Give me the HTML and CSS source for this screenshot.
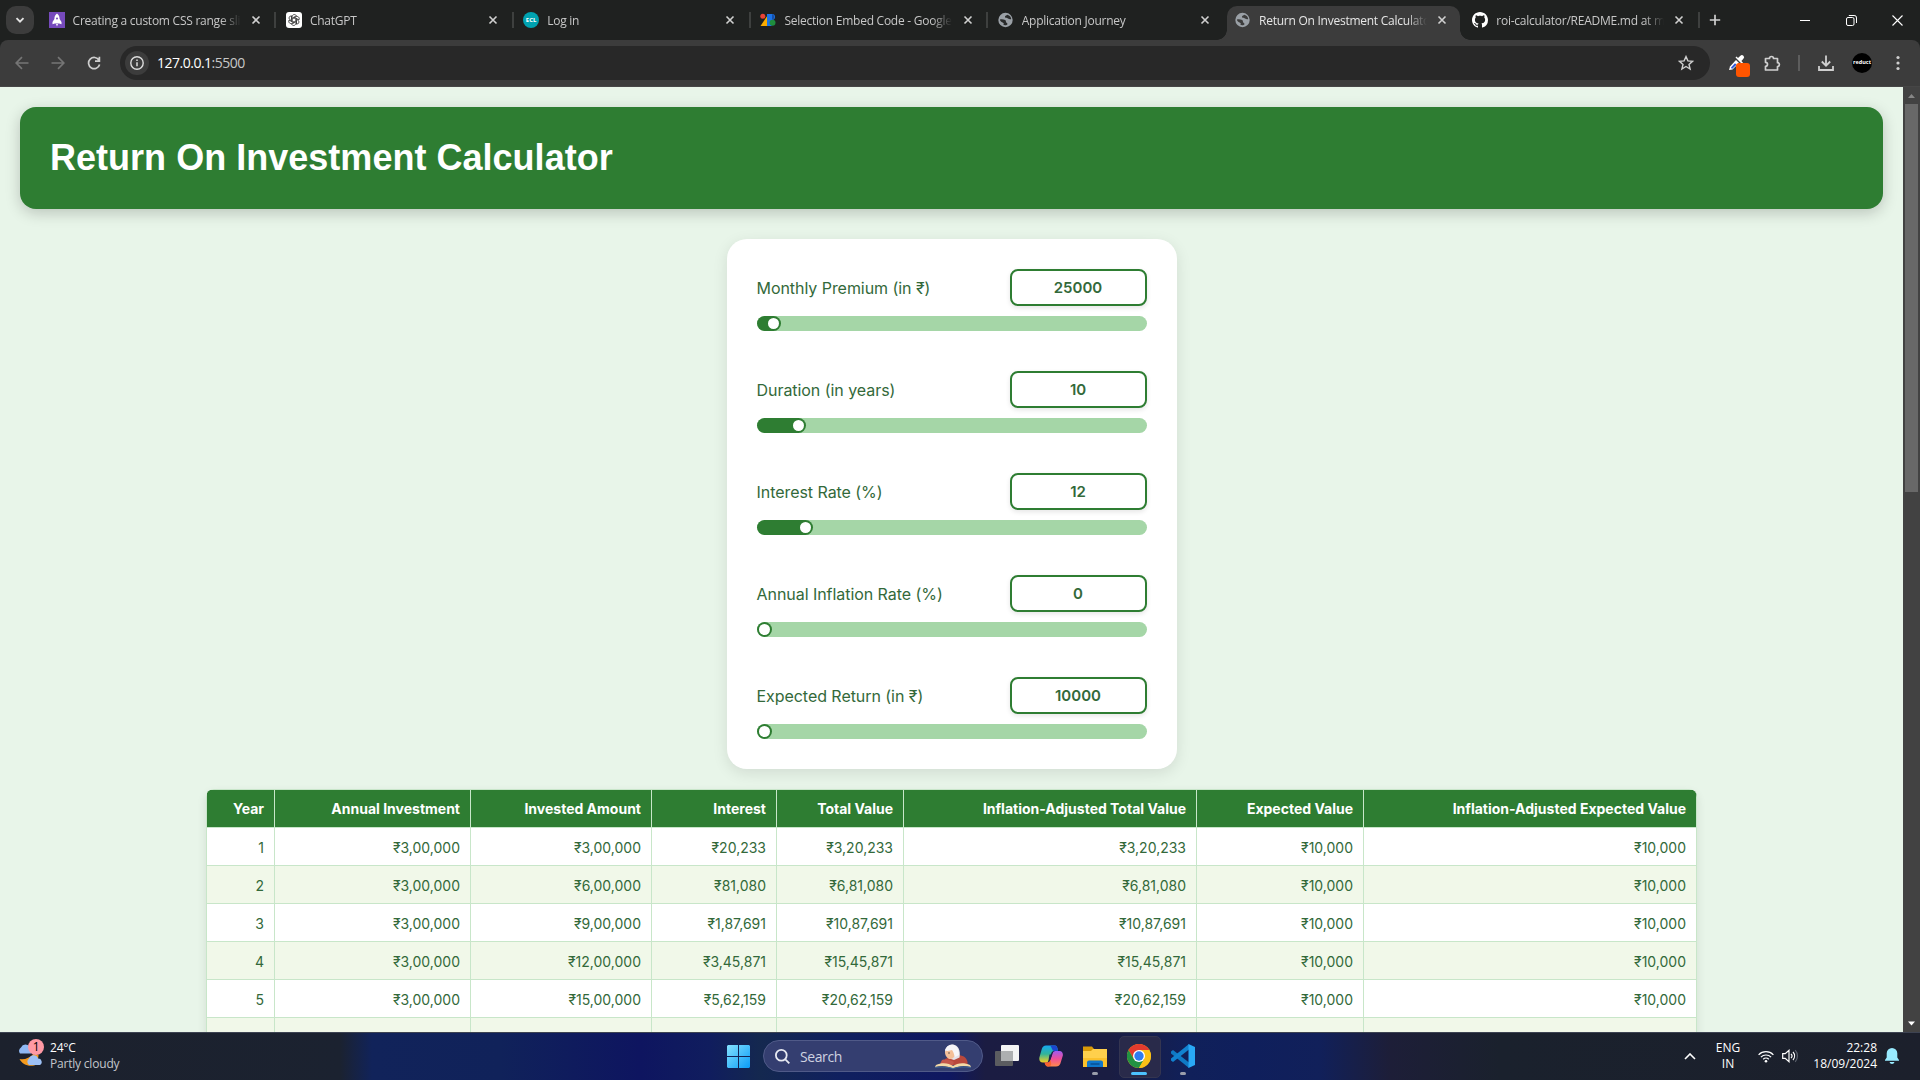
FILE: index.html
```html
<!DOCTYPE html>
<html lang="en">
<head>
<meta charset="utf-8">
<title>Return On Investment Calculator</title>
<link rel="stylesheet" href="styles.css">
</head>
<body>
<div class="screen">

<div class="tabstrip">
  <div class="tab-search"><svg width="12" height="12" viewBox="0 0 12 12"><path d="M2.500 4.200 6 7.700l3.500-3.500" fill="none" stroke="#e3e3e3" stroke-width="1.900"/></svg></div>
  <div class="tabs">
    <div class="tab">
      <svg class="fav" viewBox="0 0 16 16"><path fill="#764abc" d="M0 0h16v16H0z"/><path fill="#fff" d="M8 1.500c2 1.500 2.600 3.500 2.600 5.500L12.500 10v2.200l-2.300-.8H5.800l-2.300.8V10l1.900-3C5.400 5 6 3 8 1.500zM7 12h2l-1 2.600z"/><circle cx="8" cy="6.500" r="1" fill="#764abc"/></svg>
      <span class="tab-title">Creating a custom CSS range slider</span><svg class="x" viewBox="0 0 10 10"><path d="m1.500 1.500 7 7m0-7-7 7"/></svg>
    </div>
    <div class="tab">
      <svg class="fav" viewBox="0 0 16 16"><rect width="16" height="16" rx="3" fill="#fff"/><g fill="none" stroke="#222" stroke-width=".75"><path id="petal" d="M6.200 8.900V4.600c0-1.200 1-2.100 2.100-2.100 1 0 1.700.5 2.100 1.200L6.800 5.800"/><use href="#petal" transform="rotate(60 8 8)"/><use href="#petal" transform="rotate(120 8 8)"/><use href="#petal" transform="rotate(180 8 8)"/><use href="#petal" transform="rotate(240 8 8)"/><use href="#petal" transform="rotate(300 8 8)"/></g></svg>
      <span class="tab-title">ChatGPT</span><svg class="x" viewBox="0 0 10 10"><path d="m1.500 1.500 7 7m0-7-7 7"/></svg>
    </div>
    <div class="tab">
      <span class="fav ecl">ECL</span>
      <span class="tab-title">Log in</span><svg class="x" viewBox="0 0 10 10"><path d="m1.500 1.500 7 7m0-7-7 7"/></svg>
    </div>
    <div class="tab">
      <svg class="fav" viewBox="0 0 16 16"><path fill="#f9ab00" d="M7.500 3.500V14H.5z"/><circle cx="2.800" cy="4.200" r="2.500" fill="#ea4335"/><path fill="#1a73e8" d="M7 2h5a3 3 0 0 1 3 3c0 1.500-1 2.500-2 3l-1.500 6H7z"/><circle cx="12.500" cy="10.800" r="3" fill="#1e8e3e"/><path fill="#174ea6" d="M12 2a3 3 0 0 1 0 5.800z"/></svg>
      <span class="tab-title">Selection Embed Code - Google Fonts</span><svg class="x" viewBox="0 0 10 10"><path d="m1.500 1.500 7 7m0-7-7 7"/></svg>
    </div>
    <div class="tab">
      <svg class="fav" viewBox="0 0 16 16"><circle cx="7.500" cy="8" r="7.200" fill="#9aa0a6"/><path fill="#292b2b" d="M9.500 2.700C11.500 3.300 13 5 13.200 7c-1 .6-2.200.2-3.200-.5-1-.6-2.600-.2-3-1.400-.3-1.200 1.200-1.900 2.500-2.400zM1.900 7.500c1.600-.2 3.700-.3 5.300.6 1.300.8.200 2 1.300 2.600.9.500 1.500 1.300.5 2-1.200.7-2.600.6-3.700.1.900-1 .5-1.800-.7-2.300C3.100 9.900 2 9 1.900 7.500z"/></svg>
      <span class="tab-title">Application Journey</span><svg class="x" viewBox="0 0 10 10"><path d="m1.500 1.500 7 7m0-7-7 7"/></svg>
    </div>
    <div class="tab active">
      <svg class="fav" viewBox="0 0 16 16"><circle cx="7.500" cy="8" r="7.200" fill="#9aa0a6"/><path fill="#3c3c3c" d="M9.500 2.700C11.500 3.300 13 5 13.200 7c-1 .6-2.200.2-3.200-.5-1-.6-2.600-.2-3-1.400-.3-1.200 1.200-1.900 2.500-2.400zM1.900 7.500c1.600-.2 3.700-.3 5.300.6 1.300.8.200 2 1.300 2.600.9.500 1.500 1.300.5 2-1.200.7-2.600.6-3.700.1.900-1 .5-1.800-.7-2.300C3.100 9.900 2 9 1.900 7.500z"/></svg>
      <span class="tab-title">Return On Investment Calculator</span><svg class="x" viewBox="0 0 10 10"><path d="m1.500 1.500 7 7m0-7-7 7"/></svg>
    </div>
    <div class="tab">
      <svg class="fav" viewBox="0 0 16 16"><path fill="#fff" d="M8 0C3.580 0 0 3.580 0 8c0 3.540 2.290 6.530 5.470 7.590.4.070.55-.17.55-.38 0-.19-.01-.82-.01-1.490-2.010.37-2.530-.49-2.690-.94-.09-.23-.48-.94-.82-1.130-.28-.15-.68-.52-.01-.53.63-.01 1.080.58 1.230.82.72 1.210 1.870.87 2.330.66.070-.52.28-.87.51-1.070-1.780-.2-3.640-.89-3.640-3.950 0-.87.31-1.590.82-2.150-.08-.2-.36-1.020.08-2.120 0 0 .67-.21 2.200.82.64-.18 1.320-.27 2-.27s1.360.09 2 .27c1.530-1.040 2.200-.82 2.200-.82.44 1.100.16 1.920.08 2.120.51.560.82 1.270.82 2.150 0 3.070-1.870 3.750-3.650 3.950.29.25.54.73.54 1.480 0 1.070-.01 1.930-.01 2.200 0 .21.15.46.55.38A8.010 8.010 0 0 0 16 8c0-4.420-3.580-8-8-8z"/></svg>
      <span class="tab-title">roi-calculator/README.md at main</span><svg class="x" viewBox="0 0 10 10"><path d="m1.500 1.500 7 7m0-7-7 7"/></svg>
    </div>
  </div>
  <svg class="new-tab" width="12" height="12" viewBox="0 0 12 12"><path d="M6 .8v10.400M.8 6h10.400" stroke="#d0d0d0" stroke-width="1.700"/></svg>
  <div class="window-buttons">
    <span><svg width="10" height="10" viewBox="0 0 10 10"><path d="M0 5.500h10" stroke="#fff"/></svg></span>
    <span><svg width="11" height="11" viewBox="0 0 11 11" fill="none" stroke="#fff"><rect x=".5" y="2.500" width="7.500" height="8" rx="1.500"/><path d="M2.800.5H8A2.300 2.300 0 0 1 10.500 3v5"/></svg></span>
    <span><svg width="11" height="11" viewBox="0 0 11 11"><path d="m.5.5 10 10m0-10-10 10" stroke="#fff" stroke-width="1.100"/></svg></span>
  </div>
</div>

<div class="toolbar">
  <div class="nav">
    <svg width="14" height="14" viewBox="0 0 14 14" stroke="#757575"><path d="M13.500 7H1.500M7 1.200 1.200 7 7 12.800"/></svg>
    <svg width="14" height="14" viewBox="0 0 14 14" stroke="#757575"><path d="M.5 7h12M7 1.200 12.800 7 7 12.800"/></svg>
    <svg width="14" height="14" viewBox="0 0 14 14" stroke="#cfcfcf"><path d="M12 4.200A5.600 5.600 0 1 0 12.600 8.500M12.400.8v4.400H8"/></svg>
  </div>
  <div class="omnibox">
    <span class="info"><svg width="14" height="14" viewBox="0 0 14 14"><circle cx="7" cy="7" r="6.200" fill="none" stroke="#dcdcdc" stroke-width="1.400"/><path d="M7 6.300v4M7 3.400v1.500" stroke="#dcdcdc" stroke-width="1.500"/></svg></span>
    <span class="url">127.0.0.1<span class="port">:5500</span></span>
    <svg class="star" width="16" height="16" viewBox="0 0 16 16"><path d="m8 1.600 1.900 4.300 4.600.4-3.500 3.100 1.100 4.600L8 11.500 3.900 14 5 9.400 1.500 6.300l4.600-.4z" fill="none" stroke="#d0d0d0" stroke-width="1.400"/></svg>
  </div>
  <div class="actions">
    <span class="picker"><svg width="18" height="18" viewBox="0 0 18 18"><path d="M2 16l1-3.500L9 6l3 3-6.500 6.500z" fill="#fff"/><path d="m4 13.500 4-4.200 1.500 1.500L5 15z" fill="#2b55d8"/><path d="m8.500 3.500 6.500 6.500 1-1.200-1.600-1.900 2-2.200a2 2 0 0 0-3-3L11 4 9.500 2.500z" fill="#fff"/></svg><b></b></span>
    <svg class="puzzle" width="18" height="18" viewBox="0 0 18 18"><path d="M2.500 4.500h4a2 2 0 0 1 4 0h4v4.200a1.900 1.900 0 0 1 0 3.800V16h-12v-3.700a2 2 0 0 0 0-4z" fill="none" stroke="#cfcfcf" stroke-width="1.700" stroke-linejoin="round"/></svg>
    <i class="divider"></i>
    <svg class="download" width="16" height="16" viewBox="0 0 16 16"><path d="M8 .5v10M3.800 6.500 8 10.700l4.200-4.200M1 11v4h14v-4" fill="none" stroke="#cfcfcf" stroke-width="1.800"/></svg>
    <span class="avatar">reduct</span>
    <svg class="menu" width="4" height="16" viewBox="0 0 4 16" fill="#cfcfcf"><circle cx="2" cy="2.500" r="1.600"/><circle cx="2" cy="8" r="1.600"/><circle cx="2" cy="13.500" r="1.600"/></svg>
  </div>
</div>

<div class="viewport">
  <main class="page">
    <header class="banner"><h1>Return On Investment Calculator</h1></header>

    <section class="card">
      <div class="field"><div class="field-row"><label>Monthly Premium (in ₹)</label><output>25000</output></div><div class="slider"><div class="fill" style="width:24px"></div></div></div>
      <div class="field"><div class="field-row"><label>Duration (in years)</label><output>10</output></div><div class="slider"><div class="fill" style="width:49px"></div></div></div>
      <div class="field"><div class="field-row"><label>Interest Rate (%)</label><output>12</output></div><div class="slider"><div class="fill" style="width:56px"></div></div></div>
      <div class="field"><div class="field-row"><label>Annual Inflation Rate (%)</label><output>0</output></div><div class="slider"><div class="fill" style="width:15px"></div></div></div>
      <div class="field"><div class="field-row"><label>Expected Return (in ₹)</label><output>10000</output></div><div class="slider"><div class="fill" style="width:15px"></div></div></div>
    </section>

    <table class="results">
      <colgroup><col class="c-year"><col class="c-annual"><col class="c-invested"><col class="c-interest"><col class="c-total"><col class="c-adj-total"><col class="c-expected"><col class="c-adj-expected"></colgroup>
      <thead><tr><th>Year</th><th>Annual Investment</th><th>Invested Amount</th><th>Interest</th><th>Total Value</th><th>Inflation-Adjusted Total Value</th><th>Expected Value</th><th>Inflation-Adjusted Expected Value</th></tr></thead>
      <tbody>
        <tr><td>1</td><td>₹3,00,000</td><td>₹3,00,000</td><td>₹20,233</td><td>₹3,20,233</td><td>₹3,20,233</td><td>₹10,000</td><td>₹10,000</td></tr>
        <tr><td>2</td><td>₹3,00,000</td><td>₹6,00,000</td><td>₹81,080</td><td>₹6,81,080</td><td>₹6,81,080</td><td>₹10,000</td><td>₹10,000</td></tr>
        <tr><td>3</td><td>₹3,00,000</td><td>₹9,00,000</td><td>₹1,87,691</td><td>₹10,87,691</td><td>₹10,87,691</td><td>₹10,000</td><td>₹10,000</td></tr>
        <tr><td>4</td><td>₹3,00,000</td><td>₹12,00,000</td><td>₹3,45,871</td><td>₹15,45,871</td><td>₹15,45,871</td><td>₹10,000</td><td>₹10,000</td></tr>
        <tr><td>5</td><td>₹3,00,000</td><td>₹15,00,000</td><td>₹5,62,159</td><td>₹20,62,159</td><td>₹20,62,159</td><td>₹10,000</td><td>₹10,000</td></tr>
        <tr><td>6</td><td>₹3,00,000</td><td>₹18,00,000</td><td>₹8,43,926</td><td>₹26,43,926</td><td>₹26,43,926</td><td>₹10,000</td><td>₹10,000</td></tr>
      </tbody>
    </table>
  </main>
  <div class="scrollbar">
    <svg width="17" height="17" viewBox="0 0 17 17"><path d="M5 11h7L8.500 7z" fill="#868686"/></svg>
    <div class="thumb"></div>
    <svg class="down" width="17" height="17" viewBox="0 0 17 17"><path d="M5 6.500h7l-3.500 4z" fill="#fff"/></svg>
  </div>
</div>

<div class="taskbar">
  <div class="weather">
    <svg width="28" height="28" viewBox="0 0 28 28"><path d="M2.500 20c5 1 10-1 14-5l5 1-1 9c-7 4-15 1-18-5z" fill="#f59a1c"/><path d="M3 14.500a4 4 0 0 1 1-6 5 5 0 0 1 9-.5l1 6.500z" fill="#8fb8f2"/><path d="M12 26a4 4 0 0 1 0-6.500c2-4.500 8-4 9 0a3.500 3.500 0 0 1 2 6.500z" fill="#9dc0f5"/><circle cx="19" cy="8" r="8" fill="#ff99a4"/></svg><em>1</em>
    <div><p>24°C</p><p class="dim">Partly cloudy</p></div>
  </div>
  <div class="dock">
    <svg class="start" width="23" height="23" viewBox="0 0 23 23"><defs><linearGradient id="win" x1="0" y1="0" x2="1" y2="1"><stop stop-color="#84e2ff"/><stop offset="1" stop-color="#0a9cf8"/></linearGradient></defs><path fill="url(#win)" d="M1 0h10v11H0V1zM12 0h10l1 1v10H12zM0 12h11v11H1l-1-1zM12 12h11v10l-1 1H12z"/></svg>
    <div class="search">
      <svg width="15" height="15" viewBox="0 0 15 15" fill="none" stroke="#e8eaf2" stroke-width="1.800"><circle cx="6.300" cy="6.300" r="5.400"/><path d="m10.300 10.300 4 4"/></svg>
      <span>Search</span>
      <svg width="36" height="25" viewBox="0 0 36 25"><path d="M17 12c6-2 14-1 15.500 6v3H10v-6z" fill="#b9483c"/><path d="M10 8C10 3 14 0 18 .5c5 .5 8 6 6.500 13L19 16l-6-2z" fill="#e4e2ea"/><path d="M10 8c1-3 4-4 7-4 2 1 3 4 2.500 8-1 2.500-4 4-6 2.500C11 13 10 11 10 8z" fill="#f4bf98"/><path d="M10 6.500C11 2.500 15 0 19 1c4 1.500 5 6 5 10l-4 2c-1-3-1.500-5-3-7-2 .5-4 1.500-7 .5z" fill="#f7f5f8"/><circle cx="14" cy="9" r=".7" fill="#333"/><path d="M7 16c4-1 9 0 12 2l-2 4.500L4 22z" fill="#c4574c"/><path d="M1 21c6-3 13-2 17 1 4-3 11-4 17-1l1 2c-7-2-13-1-18 1.500C13 22 7 21 0 23z" fill="#f3d9a6"/><path d="M0 23.500c7-1 13-.5 18 1 5-1.500 11-2 18-1" fill="none" stroke="#3f6596"/></svg>
    </div>
    <svg width="24" height="24" viewBox="0 0 24 24"><rect y="7" width="18" height="15" rx="1" fill="#5b5c60"/><rect x="6" y="1" width="18" height="16" rx="1" fill="#f3f3f3"/><path d="M6 7h12v10H6z" fill="#adafb0"/></svg>
    <svg width="24" height="24" viewBox="0 0 24 24"><defs><linearGradient id="ca" x1="0" y1="0" x2="0" y2="1"><stop stop-color="#16a8f0"/><stop offset=".5" stop-color="#31b49a"/><stop offset="1" stop-color="#f7d020"/></linearGradient><linearGradient id="cb" x1="0" y1="0" x2="0" y2="1"><stop stop-color="#a05bf0"/><stop offset=".5" stop-color="#ee4f9a"/><stop offset="1" stop-color="#ff8a4a"/></linearGradient></defs><path d="M7 1.500h9c1.500 0 2 1 2.500 3L19 7h-4c-1.500 0-2.500 1-3 3l-2 6c-.5 2-2 2.500-3.500 2.500H4c-3 0-4.300-2.500-3.500-5.500l2.300-8C3.500 3 4.800 1.500 7 1.500z" fill="url(#ca)"/><path d="M12.500 1.500H16c1.500 0 2 1 2.500 3L19 7h-4c-2 0-2.500-5.500-4.500-5.500z" fill="#1b46cf"/><path d="M17 22.500H9c-1.500 0-2.500-1-3-3l-.5-1h3c2 0 2.500-1.500 3-3l2.500-7c.5-1 1.500-1.500 3-1.500h3.500c2.500 0 4 2.500 3.200 5l-2.300 7.500c-.8 2-2 3-4.400 3z" fill="url(#cb)"/><path d="M10.500 10.500h2.600l-2.400 7c-.5 1-1.200 1-2 1 1-1 1.200-5.500 1.800-8z" fill="#1c2250"/><path d="M5.500 18.500h3c1.500 0 2.500-1 3-3l.7 4c.3 2-1 3-3.200 3-2 0-3-2-3.500-4z" fill="#f9632f"/></svg>
    <div class="app"><svg width="24" height="24" viewBox="0 0 24 24"><path d="M0 2.500h9l2 2.500v3H0z" fill="#d99a08"/><path d="M0 7h8l2-2h14v18H0z" fill="#ffd04c"/><path d="M0 14h24v9H0z" fill="#fbc12c"/><path d="M4 23v-4.500a2 2 0 0 1 2-2h12a2 2 0 0 1 2 2V23z" fill="#0f77cc"/><path d="M7.500 20h9" stroke="#0a4f94" stroke-width="1.500"/></svg><i></i></div>
    <div class="app current"><svg width="24" height="24" viewBox="0 0 24 24"><circle cx="12" cy="12" r="12" fill="#fbc116"/><path d="M1.600 6A12 12 0 0 1 22.400 6H12L6.800 15z" fill="#e33b2e"/><path d="M1.600 6A12 12 0 0 0 12 24l5.200-9H6.800z" fill="#229342"/><path d="M12 6.500h10.650A12 12 0 0 1 12 24l5.200-9z" fill="#fbc116"/><circle cx="12" cy="12" r="6" fill="#fff"/><circle cx="12" cy="12" r="4.700" fill="#2f7cf0"/></svg><i></i></div>
    <div class="app"><svg width="24" height="24" viewBox="0 0 24 24"><path d="M0 7.500 2 6l16 12.500V24L0 9.500z" fill="#0f79c4"/><path d="M0 16.500 2 18 18 5.500V0L0 14.500z" fill="#1182d0"/><path d="M17.500 0 24 3v18l-6.500 3z" fill="#29a8f5"/></svg><i></i></div>
  </div>
  <div class="tray">
    <svg class="chev" width="12" height="7" viewBox="0 0 12 7"><path d="m1 6 5-5 5 5" fill="none" stroke="#fff" stroke-width="1.600"/></svg>
    <div class="lang"><p>ENG</p><p>IN</p></div>
    <svg class="wifi" width="16" height="13" viewBox="0 0 16 13" fill="none" stroke="#fff" stroke-width="1.200"><path d="M.6 4.800a10.400 10.400 0 0 1 14.800 0M2.900 7.100a7.200 7.200 0 0 1 10.200 0M5.200 9.300a4 4 0 0 1 5.600 0"/><circle cx="8" cy="11.300" r="1.300" fill="#fff" stroke="none"/></svg>
    <svg class="sound" width="17" height="14" viewBox="0 0 17 14" fill="none" stroke="#fff" stroke-width="1.200"><path d="M.7 4.700h2.500L7 1.300v11.400L3.200 9.300H.7zM9 4.800a3.200 3.200 0 0 1 0 4.400M11 3a6 6 0 0 1 0 8"/><path d="M13.200 1.200a8.600 8.600 0 0 1 0 11.600" stroke="#5c626e"/></svg>
    <div class="clock"><p>22:28</p><p>18/09/2024</p></div>
    <svg class="bell" width="14" height="16" viewBox="0 0 14 16" fill="#99ebff"><path d="M7 0a5.300 5.300 0 0 1 5.300 5.300v4.200L14 12v.8H0V12l1.700-2.500V5.300A5.300 5.300 0 0 1 7 0zM4.500 14h5a2.600 2.600 0 0 1-5 0z"/></svg>
  </div>
</div>

</div>
</body>
</html>
```
FILE: styles.css
```css
* { box-sizing: border-box; }
body { margin: 0; overflow: hidden; }
p { margin: 0; }
svg { display: block; flex: none; }

.screen {
  width: 1920px;
  height: 1080px;
  display: flex;
  flex-direction: column;
  overflow: hidden;
  font-family: "Open Sans", "Noto Sans", sans-serif;
  background: #1f2120;
}

/* Tab strip */
.tabstrip { height: 40px; flex: none; display: flex; align-items: center; background: #1f2120; }
.tab-search { width: 28px; height: 28px; margin: 0 4px 0 6px; border-radius: 10px; background: #3c3c3c; display: flex; align-items: center; justify-content: center; }
.tabs { width: 1661px; height: 40px; display: flex; }
.tab { position: relative; flex: 1 1 0; min-width: 0; display: flex; align-items: center; padding: 0 14.500px 0 10.600px; color: #c7c7c7; font-size: 12px; }
.tab::after { content: ""; position: absolute; right: -1px; top: 12px; width: 2px; height: 16px; background: #3e403f; }
.fav { width: 16px; height: 16px; flex: none; }
.ecl { border-radius: 50%; background: #00a2b0; color: #fff; font-size: 6px; font-weight: 700; line-height: 16px; text-align: center; }
.tab-title { flex: none; width: 168px; margin-left: 8px; padding-top: 1px; overflow: hidden; white-space: nowrap; letter-spacing: -0.25px; -webkit-mask-image: linear-gradient(90deg, #000 148px, transparent 168px); mask-image: linear-gradient(90deg, #000 148px, transparent 168px); }
.x { width: 10px; height: 10px; margin-left: auto; stroke: #d0d0d0; stroke-width: 1.6; fill: none; }
.tab.active { color: #e6e6e6; z-index: 1; }
.tab.active::before { content: ""; position: absolute; z-index: -1; left: 3px; right: 2px; top: 6px; bottom: 0; border-radius: 10px 10px 0 0; background: #3c3c3c; }
.tab.active::after { display: block; right: -8px; left: -7px; top: 30px; width: auto; height: 10px; background: radial-gradient(circle at 0 0, transparent 9.500px, #3c3c3c 10px) left / 10px 10px no-repeat, radial-gradient(circle at 100% 0, transparent 9.500px, #3c3c3c 10px) right / 10px 10px no-repeat; }
.tab:nth-child(5)::after { display: none; }
.new-tab { margin-left: 10px; }
.window-buttons { margin-left: auto; display: flex; }
.window-buttons span { width: 46px; display: flex; justify-content: center; align-items: center; }

/* Toolbar */
.toolbar { height: 47px; flex: none; display: flex; align-items: center; background: #3c3c3c; border-radius: 8px 8px 0 0; padding-bottom: 1px; border-bottom: 1px solid #464646; }
.nav { width: 120px; padding-left: 15px; display: flex; gap: 22px; fill: none; stroke-width: 1.7; }
.omnibox { width: 1590px; height: 34px; border-radius: 17px; background: #282828; display: flex; align-items: center; padding: 0 16px 0 5px; }
.info { width: 24px; height: 24px; border-radius: 50%; background: #3c3c3c; display: flex; align-items: center; justify-content: center; }
.url { margin-left: 8px; font-size: 14px; letter-spacing: -0.5px; color: #fff; }
.port { color: #c7c7c7; }
.star { margin-left: auto; }
.actions { flex: 1; display: flex; align-items: center; }
.picker { position: relative; margin-left: 17px; }
.picker b { position: absolute; left: 9px; top: 9px; width: 14px; height: 14px; border-radius: 3px; background: #ff5500; }
.puzzle { margin-left: 18px; }
.divider { width: 2px; height: 16px; margin-left: 17px; background: #5d5d5d; }
.download { margin-left: 18px; }
.avatar { width: 20px; height: 20px; margin-left: 18px; border-radius: 50%; background: #000; color: #fff; font-size: 5.5px; line-height: 18px; text-align: center; font-weight: 700; overflow: hidden; }
.menu { margin-left: 24px; }

/* Page */
.viewport { height: 945px; flex: none; display: flex; overflow: hidden; }
.page { width: 1903px; padding: 20px; overflow: hidden; background: #e8f5e9; font-family: Inter, sans-serif; color: #33693a; }
.banner { height: 102px; padding: 30px; border-radius: 16px; background: #2e7d32; box-shadow: 0 4px 15px rgba(0, 0, 0, 0.2); }
.banner h1 { margin: 0; color: #fff; font: bold 36px/42px "Liberation Sans", Arial, sans-serif; letter-spacing: 0.020px; }
.card { width: 450px; margin: 30px auto 20px; padding: 30px; border-radius: 20px; background: #fff; box-shadow: 0 4px 15px rgba(0, 0, 0, 0.1); display: flex; flex-direction: column; gap: 40px; }
.field { display: flex; flex-direction: column; gap: 10px; }
.field-row { height: 37px; display: flex; justify-content: space-between; align-items: center; font-size: 16px; }
.field-row label { letter-spacing: -0.050px; }
.field-row output { width: 137px; height: 37px; border: 2px solid #2e7d32; border-radius: 8px; background: #fff; box-shadow: 0 2px 5px rgba(0, 0, 0, 0.1); font-size: 15px; font-weight: 600; line-height: 34px; text-align: center; }
.slider { height: 15px; border-radius: 8px; background: #a5d6a7; }
.fill { height: 15px; border-radius: 8px; background: #2e7d32; display: flex; justify-content: flex-end; padding: 2px; }
.fill::after { content: ""; width: 11px; height: 11px; border-radius: 50%; background: #fff; }

.results { width: 1490px; margin: 0 auto; table-layout: fixed; border-collapse: collapse; border-radius: 8px; overflow: hidden; box-shadow: 0 4px 10px rgba(0, 0, 0, 0.1); font-size: 14px; line-height: 17px; background: #fff; }
.results th, .results td { border: 1px solid #c8e6c9; padding: 10px; text-align: right; white-space: nowrap; }
.results td { padding: 11px 10px 9px; }
.results th { background: #2e7d32; color: #fff; font-weight: 700; }
.results tbody tr:nth-child(even) { background: #f1f8e9; }
.c-year { width: 68px; }
.c-annual { width: 196px; }
.c-invested { width: 181px; }
.c-interest { width: 125px; }
.c-total { width: 127px; }
.c-adj-total { width: 293px; }
.c-expected { width: 167px; }
.c-adj-expected { width: 333px; }

.scrollbar { width: 17px; display: flex; flex-direction: column; align-items: center; background: #424242; }
.thumb { width: 13px; height: 388px; background: #686868; }
.down { margin-top: auto; }

/* Taskbar */
.taskbar { height: 48px; flex: none; display: grid; grid-template-columns: 727px 1fr auto; align-items: center; border-top: 1px solid #3d4352; color: #fff; font-size: 12px; background: linear-gradient(90deg, #1c212d 0, #1b2230 340px, #11235a 372px, #10225a 500px, #0e1560 640px, #101d5e 710px, #14284f 760px, #10205f 840px, #0f1760 950px, #1b1c42 985px, #1a1d42 1110px, #10205a 1190px, #0f1f5c 1250px, #11205a 1320px, #1d1e38 1390px, #1a212d 1500px, #1c202c 1920px); }
.taskbar p { line-height: 16px; }
.weather { position: relative; display: flex; align-items: center; gap: 5px; padding: 0 0 2px 17px; letter-spacing: -0.2px; }
.weather svg { margin-top: -6px; }
.weather em { position: absolute; left: 28px; top: -1px; width: 16px; line-height: 16px; text-align: center; font-style: normal; color: #000; }
.dim { color: #c3c6cc; }
.dock { display: flex; align-items: center; gap: 20px; padding-bottom: 1px; }
.search { width: 220px; height: 32px; margin: 0 -8px 0 -7px; padding: 0 11px; border: 1px solid #505a88; border-radius: 16px; background: #343e70; display: flex; align-items: center; gap: 10px; font-size: 14px; letter-spacing: -0.4px; color: #cfd2e0; }
.search svg:last-child { margin-left: auto; }
.app { position: relative; }
.app i { position: absolute; left: 9px; top: 28px; width: 6px; height: 3px; border-radius: 2px; background: #9a9eab; }
.app.current::before { content: ""; position: absolute; left: -8px; top: -8px; width: 40px; height: 40px; border: 1px solid #343550; border-radius: 5px; background: #292a4a; }
.app.current svg { position: relative; }
.app.current i { left: 4px; width: 16px; background: #4cc2ff; }
.tray { display: flex; align-items: center; padding: 0 21px 1px 0; }
.lang { width: 30px; margin-left: 17px; text-align: center; }
.wifi { margin-left: 15px; }
.sound { margin-left: 8px; }
.clock { width: 78px; text-align: right; }
.bell { margin-left: 8px; }
```
